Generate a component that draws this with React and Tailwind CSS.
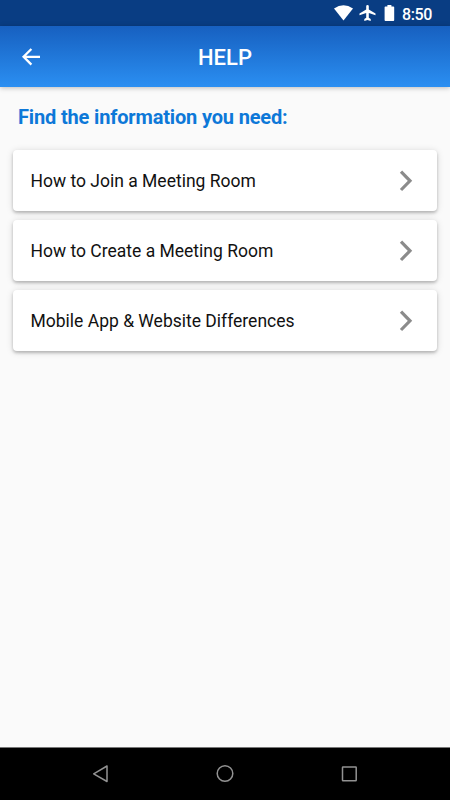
const topics = [
  'How to Join a Meeting Room',
  'How to Create a Meeting Room',
  'Mobile App & Website Differences',
];

function StatusBar() {
  return (
    <div className="flex h-[26px] shrink-0 items-center bg-[#093d83] pr-[17px] text-white">
      <svg className="ml-auto h-[26px] w-[62px] shrink-0" viewBox="333 0 62 26" fill="currentColor">
        <path d="M334 8.5Q343.5 2 353 8.5L343.5 20.5Z" />
        <path d="M375.5 15.2v-1.7l-6.7-4.1V6.2a1.3 1.3 0 0 0-2.6 0v3.2l-6.7 4.1v1.7l6.7-2.1v4.6l-1.9 1.3V21l3.2-.9 3.2.9v-2l-1.9-1.3v-4.6z" />
        <path d="M385.4 6.5h2V5h4v1.5h2q.8 0 .8.8v12.8q0 .9-.8.9h-8q-.8 0-.8-.9V7.3q0-.8.8-.8z" />
      </svg>
      <span className="ml-[7px] w-[31px] whitespace-nowrap pt-[3px] text-[16px] font-medium leading-[24px] tracking-[-0.35px]">8:50</span>
    </div>
  );
}

function Header() {
  return (
    <header className="relative z-10 grid h-[61px] shrink-0 grid-cols-[60px_1fr_60px] items-center bg-linear-to-b from-[#1760c0] to-[#2b8ff2] text-white shadow-[0_1px_5px_rgba(0,0,0,0.25)]">
      <button aria-label="Back" className="ml-[21px] h-5 w-5">
        <svg className="h-5 w-5" viewBox="0 0 20 20" fill="none" stroke="currentColor" strokeWidth="2.3">
          <path d="M19 9.8H2.7M10.4 2L2.6 9.8l7.8 7.8" />
        </svg>
      </button>
      <h1 className="pt-[2px] text-center text-[22px] font-medium leading-[26px]">HELP</h1>
    </header>
  );
}

function TopicCard({ title }) {
  return (
    <button className="flex h-[61px] w-full items-center justify-between rounded-[4px] bg-white pl-[17.5px] pr-[24px] text-left shadow-[0_2px_3px_rgba(0,0,0,0.2),0_1px_7px_rgba(0,0,0,0.15)]">
      <span className="whitespace-nowrap text-[17.5px] leading-6 text-[#111]">{title}</span>
      <svg className="h-[22px] w-[14px]" viewBox="0 0 14 22" fill="none" stroke="#8b8b8b" strokeWidth="3.2">
        <path d="M2 1.6L11 10.8 2 20" />
      </svg>
    </button>
  );
}

function NavigationBar() {
  return (
    <nav className="h-[53px] shrink-0 border-t border-[#777] bg-black">
      <svg className="h-[52px] w-full" viewBox="0 748 450 52" fill="none" stroke="#929292" strokeWidth="1.5" strokeLinejoin="round">
        <path d="M93.7 773.8L107 766v15.5z" />
        <circle cx="225" cy="773.5" r="7.8" />
        <rect x="342.5" y="767" width="13.7" height="13.7" rx=".5" />
      </svg>
    </nav>
  );
}

export default function App() {
  return (
    <div className="flex h-[800px] w-[450px] flex-col overflow-hidden bg-[#fafafa] font-[Roboto,sans-serif]">
      <StatusBar />
      <Header />
      <main className="flex-1 px-[13px] pt-[18px]">
        <h2 className="mb-[21px] whitespace-nowrap pl-[5px] text-[20px] font-bold leading-6 tracking-[-0.16px] text-[#0d78d8]">
          Find the information you need:
        </h2>
        <div className="flex flex-col gap-[9px]">
          {topics.map((title) => (
            <TopicCard key={title} title={title} />
          ))}
        </div>
      </main>
      <NavigationBar />
    </div>
  );
}
